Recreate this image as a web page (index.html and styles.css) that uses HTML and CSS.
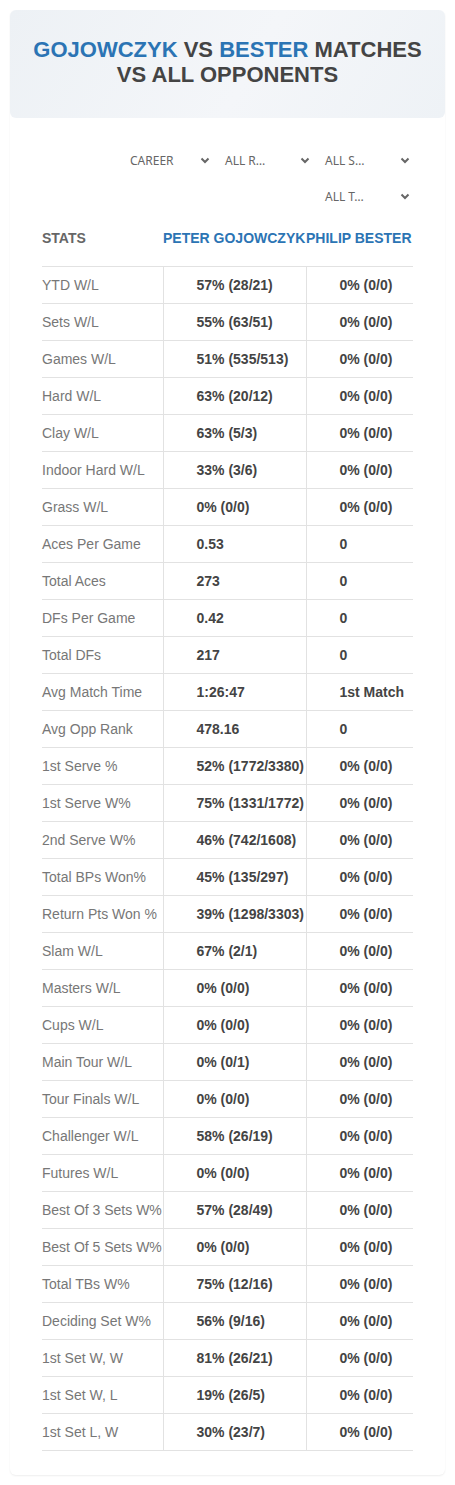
FILE: index.html
```html
<!DOCTYPE html>
<html lang="en">
<head>
    <meta charset="UTF-8">
    <meta name="viewport" content="width=device-width, initial-scale=1.0">
    <link rel="stylesheet" href="styles.css">
    <title>Gojowczyk vs Bester</title>
</head>
<body>
    <div class="card">
        <div class="title-box">
            <h1><span class="blue">Gojowczyk</span> vs <span class="blue">Bester</span> Matches vs All Opponents</h1>
        </div>

        <div class="filters">
            <div class="select first"><span>CAREER</span><svg viewBox="0 0 10 7" width="10" height="7"><path d="M1.5 1.5 L5 5 L8.5 1.5" fill="none" stroke="#666" stroke-width="2"/></svg></div>
            <div class="select"><span>ALL R…</span><svg viewBox="0 0 10 7" width="10" height="7"><path d="M1.5 1.5 L5 5 L8.5 1.5" fill="none" stroke="#666" stroke-width="2"/></svg></div>
            <div class="select"><span>ALL S…</span><svg viewBox="0 0 10 7" width="10" height="7"><path d="M1.5 1.5 L5 5 L8.5 1.5" fill="none" stroke="#666" stroke-width="2"/></svg></div>
            <div class="select"><span>ALL T…</span><svg viewBox="0 0 10 7" width="10" height="7"><path d="M1.5 1.5 L5 5 L8.5 1.5" fill="none" stroke="#666" stroke-width="2"/></svg></div>
        </div>

        <table class="stats">
            <colgroup>
                <col class="c-label">
                <col class="c-p1">
                <col class="c-p2">
            </colgroup>
            <thead>
                <tr>
                    <th class="grey">STATS</th>
                    <th>PETER GOJOWCZYK</th>
                    <th>PHILIP BESTER</th>
                </tr>
            </thead>
            <tbody>
                <tr><td>YTD W/L</td><td>57% (28/21)</td><td>0% (0/0)</td></tr>
                <tr><td>Sets W/L</td><td>55% (63/51)</td><td>0% (0/0)</td></tr>
                <tr><td>Games W/L</td><td>51% (535/513)</td><td>0% (0/0)</td></tr>
                <tr><td>Hard W/L</td><td>63% (20/12)</td><td>0% (0/0)</td></tr>
                <tr><td>Clay W/L</td><td>63% (5/3)</td><td>0% (0/0)</td></tr>
                <tr><td>Indoor Hard W/L</td><td>33% (3/6)</td><td>0% (0/0)</td></tr>
                <tr><td>Grass W/L</td><td>0% (0/0)</td><td>0% (0/0)</td></tr>
                <tr><td>Aces Per Game</td><td>0.53</td><td>0</td></tr>
                <tr><td>Total Aces</td><td>273</td><td>0</td></tr>
                <tr><td>DFs Per Game</td><td>0.42</td><td>0</td></tr>
                <tr><td>Total DFs</td><td>217</td><td>0</td></tr>
                <tr><td>Avg Match Time</td><td>1:26:47</td><td>1st Match</td></tr>
                <tr><td>Avg Opp Rank</td><td>478.16</td><td>0</td></tr>
                <tr><td>1st Serve %</td><td>52% (1772/3380)</td><td>0% (0/0)</td></tr>
                <tr><td>1st Serve W%</td><td>75% (1331/1772)</td><td>0% (0/0)</td></tr>
                <tr><td>2nd Serve W%</td><td>46% (742/1608)</td><td>0% (0/0)</td></tr>
                <tr><td>Total BPs Won%</td><td>45% (135/297)</td><td>0% (0/0)</td></tr>
                <tr><td>Return Pts Won %</td><td>39% (1298/3303)</td><td>0% (0/0)</td></tr>
                <tr><td>Slam W/L</td><td>67% (2/1)</td><td>0% (0/0)</td></tr>
                <tr><td>Masters W/L</td><td>0% (0/0)</td><td>0% (0/0)</td></tr>
                <tr><td>Cups W/L</td><td>0% (0/0)</td><td>0% (0/0)</td></tr>
                <tr><td>Main Tour W/L</td><td>0% (0/1)</td><td>0% (0/0)</td></tr>
                <tr><td>Tour Finals W/L</td><td>0% (0/0)</td><td>0% (0/0)</td></tr>
                <tr><td>Challenger W/L</td><td>58% (26/19)</td><td>0% (0/0)</td></tr>
                <tr><td>Futures W/L</td><td>0% (0/0)</td><td>0% (0/0)</td></tr>
                <tr><td>Best Of 3 Sets W%</td><td>57% (28/49)</td><td>0% (0/0)</td></tr>
                <tr><td>Best Of 5 Sets W%</td><td>0% (0/0)</td><td>0% (0/0)</td></tr>
                <tr><td>Total TBs W%</td><td>75% (12/16)</td><td>0% (0/0)</td></tr>
                <tr><td>Deciding Set W%</td><td>56% (9/16)</td><td>0% (0/0)</td></tr>
                <tr><td>1st Set W, W</td><td>81% (26/21)</td><td>0% (0/0)</td></tr>
                <tr><td>1st Set W, L</td><td>19% (26/5)</td><td>0% (0/0)</td></tr>
                <tr><td>1st Set L, W</td><td>30% (23/7)</td><td>0% (0/0)</td></tr>
            </tbody>
        </table>
    </div>
</body>
</html>
```

FILE: styles.css
```css
body {
    font-family: "Liberation Sans", Arial, sans-serif;
    background-color: #ffffff;
    margin: 0;
    padding: 0;
    color: #444;
}

.card {
    margin: 10px;
    padding-bottom: 24px;
    background: #ffffff;
    border-radius: 6px;
    box-shadow: 0 1px 2px rgba(0, 0, 0, 0.07);
}

.title-box {
    background: linear-gradient(120deg, #edf1f5 0%, #f4f6f9 55%, #eef2f6 100%);
    border-radius: 6px;
    padding: 27px 10px 31px;
    text-align: center;
}

h1 {
    margin: 0;
    font-size: 22px;
    line-height: 25px;
    font-weight: bold;
    text-transform: uppercase;
    color: #444;
}

.blue {
    color: #2b74b4;
}

.filters {
    display: flex;
    flex-wrap: wrap;
    justify-content: flex-end;
    margin: 24px 32px 0;
}

.select {
    width: 100px;
    height: 36px;
    box-sizing: border-box;
    padding: 0 3px 0 12px;
    display: flex;
    align-items: center;
    justify-content: space-between;
    font-family: "Noto Sans", "Open Sans", sans-serif;
    font-size: 12px;
    color: #666;
}

.select.first {
    padding-left: 17px;
}

.stats {
    margin: 0 32px;
    width: calc(100% - 64px);
    border-collapse: collapse;
    table-layout: fixed;
    font-size: 14px;
}

.c-label {
    width: 121px;
}

.c-p1 {
    width: 143px;
}

.stats th {
    height: 48px;
    padding: 0 0 4px;
    text-align: left;
    font-weight: bold;
    color: #2b74b4;
    white-space: nowrap;
}

.stats th.grey {
    color: #666;
}

.stats td {
    height: 36px;
    padding: 0 0 0 33px;
    border-top: 1px solid #e2e2e2;
    border-bottom: 1px solid #e2e2e2;
    font-weight: bold;
    color: #444;
    white-space: nowrap;
}

.stats td:first-child {
    padding-left: 0;
    font-weight: normal;
    color: #777;
    border-right: 1px solid #e2e2e2;
}

.stats td:nth-child(2) {
    border-right: 1px solid #e2e2e2;
}
```
